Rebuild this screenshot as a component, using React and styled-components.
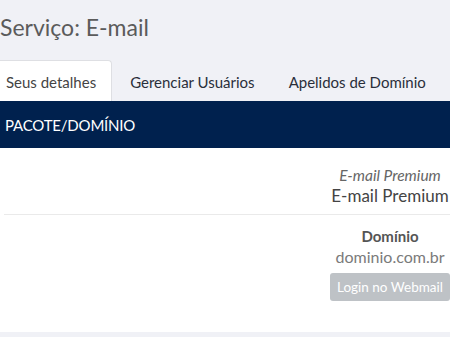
import React from 'react'
import styled, { createGlobalStyle } from 'styled-components'

const Global = createGlobalStyle`
  html, body { margin: 0; padding: 0; }
  body {
    background: #f0f1f6;
    font-family: Lato, "Liberation Sans", sans-serif;
    overflow: hidden;
  }
`

const Page = styled.div`
  width: 450px;
  overflow: hidden;
`

const Title = styled.h1`
  margin: 0;
  padding: 12px 0 0 0;
  height: 48px;
  box-sizing: border-box;
  font-size: 23px;
  font-weight: 400;
  color: #5b5b5b;
  line-height: 30px;
`

const Tabs = styled.ul`
  display: flex;
  list-style: none;
  margin: 12px 0 0 -10px;
  padding: 0;
  height: 41px;
  white-space: nowrap;
`

const Tab = styled.li`
  box-sizing: border-box;
  height: 41px;
  padding: 1px 15px 0;
  margin-right: 2px;
  display: flex;
  align-items: center;
  font-size: 15px;
  color: ${p => (p.$active ? '#444' : '#2a2f3a')};
  background: ${p => (p.$active ? '#fff' : 'transparent')};
  border: 1px solid ${p => (p.$active ? '#dedfe3' : 'transparent')};
  border-bottom: none;
  border-radius: 4px 4px 0 0;
`

const Bar = styled.div`
  background: #00214e;
  height: 47px;
  display: flex;
  align-items: center;
  padding-left: 5px;
  color: #fff;
  font-size: 15px;
  letter-spacing: -0.2px;
`

const Panel = styled.div`
  background: #fff;
  height: 184px;
  padding: 0 0 0 4px;
`

const Row = styled.div`
  display: flex;
  justify-content: flex-end;
  padding: ${p => p.$pad};
  border-bottom: ${p => (p.$divider ? '1px solid #eaeaea' : 'none')};
`

const Cell = styled.div`
  width: 120px;
  display: flex;
  flex-direction: column;
  align-items: center;
  white-space: nowrap;
  text-align: center;
`

const Sub = styled.div`
  font-style: italic;
  font-size: 15.5px;
  color: #666;
  line-height: 20px;
`

const Main = styled.div`
  font-size: 17px;
  color: #444;
  line-height: 22px;
`

const Label = styled.div`
  font-weight: 700;
  font-size: 15px;
  color: #555;
  line-height: 20px;
`

const Value = styled.div`
  font-size: 16px;
  color: #7a7a7a;
  line-height: 22px;
`

const Button = styled.button`
  margin-top: 5px;
  height: 28px;
  width: 120px;
  border: none;
  border-radius: 3px;
  background: #bec2c6;
  color: #fff;
  font-family: inherit;
  font-size: 13.5px;
  padding: 0;
`

export default function App() {
  return (
    <Page>
      <Global />
      <Title>Serviço: E-mail</Title>
      <Tabs>
        <Tab $active>Seus detalhes</Tab>
        <Tab>Gerenciar Usuários</Tab>
        <Tab>Apelidos de Domínio</Tab>
      </Tabs>
      <Bar>PACOTE/DOMÍNIO</Bar>
      <Panel>
        <Row $pad="17px 0 7px" $divider>
          <Cell>
            <Sub>E-mail Premium</Sub>
            <Main>E-mail Premium</Main>
          </Cell>
        </Row>
        <Row $pad="11px 0 0">
          <Cell>
            <Label>Domínio</Label>
            <Value>dominio.com.br</Value>
            <Button>Login no Webmail</Button>
          </Cell>
        </Row>
      </Panel>
    </Page>
  )
}
